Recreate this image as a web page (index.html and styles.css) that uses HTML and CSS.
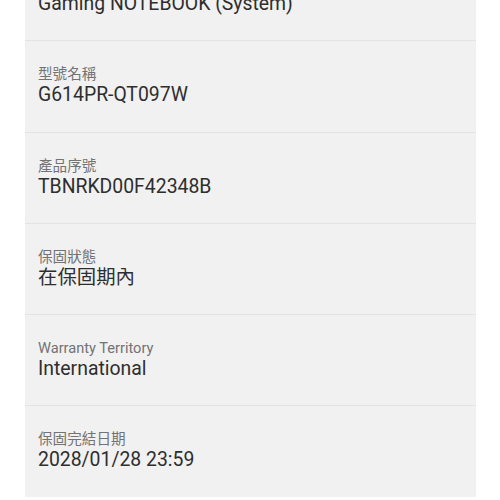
FILE: index.html
```html
<!DOCTYPE html>
<html lang="zh-Hant">
<head>
<meta charset="utf-8">
<link rel="stylesheet" href="styles.css">
</head>
<body>
<div class="card">
  <div class="row">
    <div class="label">產品名稱</div>
    <div class="value">Gaming NOTEBOOK (System)</div>
  </div>
  <div class="row">
    <div class="label">型號名稱</div>
    <div class="value">G614PR-QT097W</div>
  </div>
  <div class="row">
    <div class="label">產品序號</div>
    <div class="value">TBNRKD00F42348B</div>
  </div>
  <div class="row">
    <div class="label">保固狀態</div>
    <div class="value">在保固期內</div>
  </div>
  <div class="row">
    <div class="label">Warranty Territory</div>
    <div class="value">International</div>
  </div>
  <div class="row last">
    <div class="label">保固完結日期</div>
    <div class="value">2028/01/28 23:59</div>
  </div>
</div>
</body>
</html>
```

FILE: styles.css
```css
html, body {
  margin: 0;
  padding: 0;
  background: #ffffff;
}
body {
  font-family: Roboto, "Noto Sans CJK TC", sans-serif;
  overflow: hidden;
}
.card {
  width: 451px;
  margin: -50px 0 0 25px;
  background: #f1f1f1;
}
.row {
  height: 90.25px;
  box-sizing: content-box;
  border-bottom: 1px solid #e3e3e3;
  padding: 0 13px;
  display: flex;
  flex-direction: column;
  justify-content: flex-start;
}
.row.last {
  border-bottom: none;
}
.label {
  margin-top: 24px;
  font-size: 14.6px;
  line-height: 18px;
  color: #737373;
}
.value {
  font-size: 19.4px;
  line-height: 24px;
  color: #2e2e2e;
}
```
